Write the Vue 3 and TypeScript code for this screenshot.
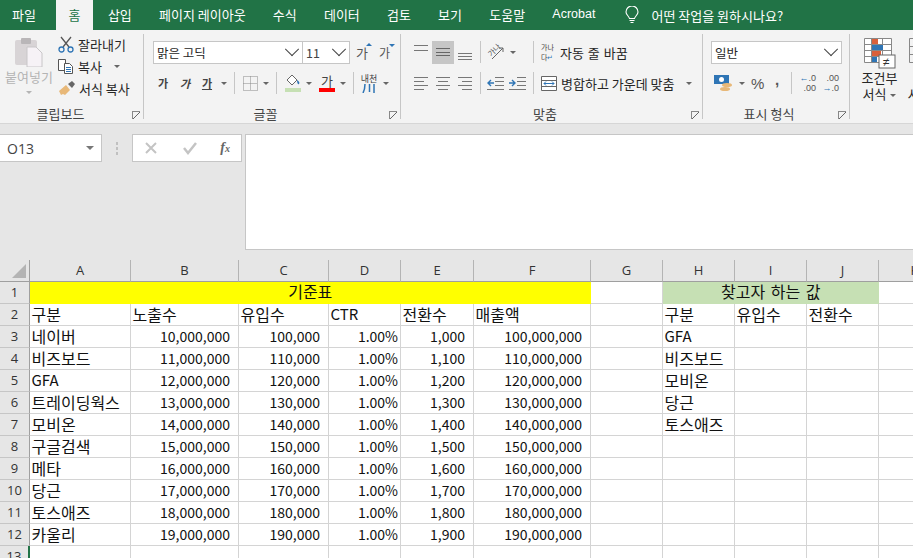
<script setup lang="ts">
const tabs = ['파일', '홈', '삽입', '페이지 레이아웃', '수식', '데이터', '검토', '보기', '도움말', 'Acrobat']
const columns = ['A', 'B', 'C', 'D', 'E', 'F', 'G', 'H', 'I', 'J', 'K']

const fmt = (n: number) => n.toLocaleString('en-US')
const channels = ['네이버', '비즈보드', 'GFA', '트레이딩웍스', '모비온', '구글검색', '메타', '당근', '토스애즈', '카울리']
const lookup = ['GFA', '비즈보드', '모비온', '당근', '토스애즈']

interface Cell {
  text: string
  kind?: 'num' | 'pct'
}

const text = (t = ''): Cell => ({ text: t })
const num = (t: string): Cell => ({ text: t, kind: 'num' })

const headerRow: Cell[] = ['구분', '노출수', '유입수', 'CTR', '전환수', '매출액', '', '구분', '유입수', '전환수', ''].map(t => text(t))

const dataRows: Cell[][] = channels.map((name, i) => [
  text(name),
  num(fmt(10000000 + i * 1000000)),
  num(fmt(100000 + i * 10000)),
  { text: '1.00%', kind: 'pct' },
  num(fmt(1000 + i * 100)),
  num(fmt(100000000 + i * 10000000)),
  text(),
  text(lookup[i] ?? ''),
  text(),
  text(),
  text()
])

const rows: Cell[][] = [headerRow, ...dataRows, Array.from({ length: 11 }, () => text())]

const isLatin = (t: string) => /^[\x00-\x7f]+$/.test(t)
</script>

<template>
  <div class="app">
    <nav class="tabs">
      <span v-for="tab in tabs" :key="tab" class="tab" :class="{ active: tab === '홈' }">{{ tab }}</span>
      <span class="tell">
        <svg width="14" height="19" viewBox="0 0 14 19" fill="none" stroke="#fff" stroke-width="1.1">
          <path d="M4.5 12.5C4 10 1 9 1 6a6 6 0 0 1 12 0c0 3-3 4-3.500 6.500z" />
          <path d="M4.500 14.500h5M5.500 16.500h3" />
        </svg>
        <span>어떤 작업을 원하시나요?</span>
      </span>
    </nav>

    <section class="ribbon">
      <div class="group g-clip">
        <div class="body clip-body">
          <div class="paste">
            <svg width="30" height="30" viewBox="0 0 30 30">
              <rect x="1" y="3" width="22" height="25" rx="2" fill="#d8d4d6" />
              <rect x="7" y="1" width="10" height="6" rx="1" fill="#b9b6b8" />
              <path d="M13 10h9l6 6v14H13z" fill="#f6f2f6" stroke="#c8c6c8" />
            </svg>
            <span class="paste-label">붙여넣기</span>
            <i class="caret faded"></i>
          </div>
          <div class="clip-list">
            <div class="clip-item">
              <svg width="16" height="17" viewBox="0 0 16 17" fill="none">
                <path d="M3 1l8 10M13 1L5 11" stroke="#555" stroke-width="1.300" />
                <circle cx="3.500" cy="13.500" r="2.500" stroke="#2f75b5" stroke-width="1.300" />
                <circle cx="12.500" cy="13.500" r="2.500" stroke="#2f75b5" stroke-width="1.300" />
              </svg>
              <span>잘라내기</span>
            </div>
            <div class="clip-item">
              <svg width="16" height="15" viewBox="0 0 16 15" fill="#fff" stroke="#555">
                <path d="M.5.500h7v11h-7z" />
                <path d="M6.500 4.500h5l3 3v7h-8z" />
                <path d="M8 8.500h5M8 10.500h5M8 12.500h5" stroke="#2f75b5" />
              </svg>
              <span>복사</span>
              <i class="caret tail"></i>
            </div>
            <div class="clip-item">
              <svg width="17" height="15" viewBox="0 0 17 15">
                <path d="M1 10l7-6 4 5-5 5-2-1-2 1z" fill="#e8b878" />
                <path d="M10 3l4-3 3 3-3 4z" fill="#666" />
              </svg>
              <span>서식 복사</span>
            </div>
          </div>
        </div>
        <div class="label">클립보드<i class="launcher"></i></div>
      </div>

      <div class="group g-font">
        <div class="body stack">
          <div class="line">
            <div class="combo font-name"><span>맑은 고딕</span><i class="chev"></i></div>
            <div class="combo font-size"><span>11</span><i class="chev"></i></div>
            <span class="bump">가<i class="tri up"></i></span>
            <span class="bump small">가<i class="tri down"></i></span>
          </div>
          <div class="line tools">
            <b class="mini">가</b>
            <em class="mini">가</em>
            <u class="mini">가</u>
            <i class="caret"></i>
            <i class="sep"></i>
            <svg width="15" height="15" viewBox="0 0 15 15" fill="none" stroke="#888" stroke-dasharray="1 1">
              <path d="M.5.500h14v14H.5zM7.500.500v14M.5 7.500h14" />
            </svg>
            <i class="caret"></i>
            <i class="sep"></i>
            <span class="swatch">
              <svg width="16" height="13" viewBox="0 0 16 13">
                <path d="M2 6l5-5 5 5-5 5z" fill="#fff" stroke="#666" />
                <path d="M12 6c2 1 3 3 2 4s-2-1-2-4z" fill="#2f75b5" />
              </svg>
              <i class="bar green"></i>
            </span>
            <i class="caret"></i>
            <span class="swatch">
              <span class="swatch-text">가</span>
              <i class="bar red"></i>
            </span>
            <i class="caret"></i>
            <i class="sep"></i>
            <span class="ruby"><span>내천</span>
              <svg width="14" height="9" viewBox="0 0 14 9" fill="none" stroke="#2f75b5" stroke-width="1.500">
                <path d="M3 0c0 4-1 7-2 9M7.500 0v8M12 0v9" />
              </svg>
            </span>
            <i class="caret"></i>
          </div>
        </div>
        <div class="label">글꼴<i class="launcher"></i></div>
      </div>

      <div class="group g-align">
        <div class="body stack">
          <div class="line">
            <span class="al"><i class="lines top"></i></span>
            <span class="al on"><i class="lines mid"></i></span>
            <span class="al"><i class="lines bot"></i></span>
            <i class="sep"></i>
            <span class="orient">
              <svg width="18" height="18" viewBox="0 0 18 18" fill="none">
                <text x="1" y="12" font-size="7.500" fill="#555" transform="rotate(-45 5 9)" font-family="Noto Sans CJK KR, sans-serif">가나</text>
                <path d="M5 16L16 5M16 5h-4M16 5v4" stroke="#666" />
              </svg>
              <i class="caret"></i>
            </span>
            <i class="sep"></i>
            <span class="act">
              <span class="wrap-icon">가나<br />다<span class="blue">↵</span></span>
              <span class="wide">자동 줄 바꿈</span>
            </span>
          </div>
          <div class="line">
            <span class="al"><i class="lines left"></i></span>
            <span class="al"><i class="lines center"></i></span>
            <span class="al"><i class="lines right"></i></span>
            <i class="sep"></i>
            <span class="indent">
              <svg width="17" height="13" viewBox="0 0 17 13" fill="none">
                <path d="M8 .5h9M8 4.500h9M8 8.500h9M0 12.500h17" stroke="#777" />
                <path d="M7 6H1M4 3L1 6l3 3" stroke="#2f75b5" stroke-width="1.400" />
              </svg>
              <svg width="17" height="13" viewBox="0 0 17 13" fill="none">
                <path d="M8 .5h9M8 4.500h9M8 8.500h9M0 12.500h17" stroke="#777" />
                <path d="M0 6h6M3 3l3 3-3 3" stroke="#2f75b5" stroke-width="1.400" />
              </svg>
            </span>
            <i class="sep"></i>
            <span class="act">
              <svg width="16" height="15" viewBox="0 0 16 15" fill="#fff" stroke="#666">
                <path d="M.5.500h15v14H.5zM.5 4.500h15M.5 10.500h15" />
                <path d="M3 7.500h10M5 5.500l-2 2 2 2M11 5.500l2 2-2 2" stroke="#2f75b5" fill="none" />
              </svg>
              <span>병합하고 가운데 맞춤</span>
              <i class="caret merge-caret"></i>
            </span>
          </div>
        </div>
        <div class="label">맞춤<i class="launcher"></i></div>
      </div>

      <div class="group g-num">
        <div class="body stack">
          <div class="line">
            <div class="combo num-format"><span>일반</span><i class="chev"></i></div>
          </div>
          <div class="line tools num-tools">
            <svg width="20" height="18" viewBox="0 0 20 18">
              <rect x="0" y="1" width="15" height="9" fill="#2f75b5" />
              <circle cx="7.500" cy="5.500" r="2.500" fill="#fff" />
              <ellipse cx="13" cy="11" rx="5" ry="2" fill="#e8b878" />
              <ellipse cx="11" cy="15" rx="5" ry="2" fill="#e8b878" />
            </svg>
            <i class="caret"></i>
            <span class="percent">%</span>
            <span class="comma">,</span>
            <i class="sep"></i>
            <span class="dec"><span><em class="arr">←</em>.0</span><span>.00</span></span>
            <span class="dec"><span>.00</span><span><em class="arr">→</em>.0</span></span>
          </div>
        </div>
        <div class="label">표시 형식<i class="launcher"></i></div>
      </div>

      <div class="group g-style">
        <div class="style-btn">
          <svg width="32" height="31" viewBox="0 0 32 31">
            <path d="M.5.500h27v24H.5zM.5 6.500h27M.5 12.500h27M.5 18.500h27M7.500.500v24M18.500.500v24" fill="#fff" stroke="#888" />
            <path d="M8 1h6v5H8zM8 13h9v5H8z" fill="#d9603b" />
            <path d="M8 7h11v5H8zM8 19h5v5H8z" fill="#2f75b5" />
            <rect x="15" y="17" width="16" height="13" fill="#fff" stroke="#666" />
            <text x="19" y="28" font-size="12" fill="#333" font-family="Liberation Sans, sans-serif">≠</text>
          </svg>
          <span class="style-label">조건부<br />서식<i class="caret"></i></span>
        </div>
        <div class="style-btn">
          <svg width="32" height="31" viewBox="0 0 32 31" fill="none" stroke="#888">
            <path d="M.5.500h27v24H.5zM.5 8.500h27M.5 16.500h27M9.500.500v24" />
          </svg>
          <span class="style-label">표<br />서식<i class="caret"></i></span>
        </div>
      </div>
    </section>

    <section class="formula">
      <div class="name-box"><span>O13</span><i class="caret"></i></div>
      <div class="dots"><i></i><i></i><i></i></div>
      <div class="fx-box">
        <svg width="16" height="14" viewBox="0 0 16 14" fill="none" stroke="#c4c4c4" stroke-width="2">
          <path d="M3 2l10 10M13 2L3 12" />
        </svg>
        <svg width="16" height="14" viewBox="0 0 16 14" fill="none" stroke="#c4c4c4" stroke-width="2.500">
          <path d="M2 7l4 5 8-10" />
        </svg>
        <span class="fx">f<sub>x</sub></span>
      </div>
      <div class="input"></div>
    </section>

    <section class="sheet">
      <div class="corner"><i></i></div>
      <div v-for="col in columns" :key="col" class="col-head">{{ col }}</div>

      <div class="row-head">1</div>
      <div class="cell title yellow">기준표</div>
      <div class="cell"></div>
      <div class="cell title green">찾고자 하는 값</div>
      <div class="cell"></div>

      <template v-for="(row, r) in rows" :key="r">
        <div class="row-head" :class="{ marked: r === 11 }">{{ r + 2 }}</div>
        <div
          v-for="(cell, c) in row"
          :key="c"
          class="cell"
          :class="[cell.kind, { latin: isLatin(cell.text) }]"
        >{{ cell.text }}</div>
      </template>
    </section>
  </div>
</template>

<style scoped>
.app {
  width: 913px;
  height: 558px;
  overflow: hidden;
  background: #e6e6e6;
  color: #262626;
  font-family: "Noto Sans CJK KR", "Noto Sans", sans-serif;
}

i {
  font-style: normal;
}

/* tab strip */
.tabs {
  height: 30px;
  background: #217346;
  display: flex;
  align-items: center;
  color: #fff;
  font-size: 13px;
}

.tab {
  height: 30px;
  line-height: 29px;
  padding: 0 13.600px;
  white-space: nowrap;
}

.tab:first-child {
  padding: 0 20px 0 12px;
}

.tab.active {
  background: #f3f3f3;
  color: #217346;
  padding: 0 12.500px;
  margin-right: 1.400px;
}

.tell {
  display: flex;
  align-items: center;
  gap: 12px;
  margin-left: 16.500px;
}

.tabs .tab:nth-child(10) {
  font-family: "Liberation Sans", sans-serif;
  font-size: 12.500px;
}

/* ribbon */
.ribbon {
  height: 93px;
  background: #f3f3f3;
  border-bottom: 1px solid #d6d6d6;
  display: flex;
  overflow: hidden;
  font-size: 13px;
}

.group {
  position: relative;
  flex: none;
  box-sizing: border-box;
  height: 85px;
  margin-top: 4px;
  border-right: 1px solid #c6c6c6;
  display: flex;
  flex-direction: column;
}

.g-clip { width: 144px; }
.g-font { width: 257px; padding-left: 9px; }
.g-align { width: 302px; padding-left: 9px; }
.g-num { width: 147px; padding-left: 8px; }
.g-style { width: 62px; border-right: none; flex-direction: row; gap: 8px; padding-left: 11px; }

.body {
  box-sizing: border-box;
  height: 70px;
  flex: none;
}

.label {
  height: 15px;
  line-height: 20px;
  padding-right: 22px;
  text-align: center;
  font-size: 13px;
  color: #444;
}

.launcher {
  position: absolute;
  right: 3px;
  bottom: 0;
  width: 7px;
  height: 7px;
  border-left: 1px solid #888;
  border-top: 1px solid #888;
  background: linear-gradient(135deg, transparent 45%, #666 45%, #666 55%, transparent 55%);
}

.clip-body {
  display: flex;
}

.paste {
  width: 58px;
  flex: none;
  display: flex;
  flex-direction: column;
  align-items: center;
  padding-top: 3px;
}

.paste-label {
  color: #b4b4b4;
  line-height: 18px;
  margin-top: 1px;
  white-space: nowrap;
}

.caret {
  display: inline-block;
  flex: none;
  width: 0;
  height: 0;
  border: 3px solid transparent;
  border-top: 3px solid #666;
  border-bottom: none;
}

.caret.faded {
  border-top-color: #b4b4b4;
  margin-top: 5px;
}

.caret.tail {
  margin-left: 8px;
}

.clip-list {
  display: flex;
  flex-direction: column;
  gap: 3px;
  padding-top: 1px;
}

.clip-item {
  height: 19px;
  display: flex;
  align-items: center;
  gap: 4px;
  white-space: nowrap;
}

.stack {
  display: flex;
  flex-direction: column;
  gap: 7px;
  padding-top: 6px;
}

.line {
  display: flex;
  align-items: center;
  height: 24px;
}

.combo {
  box-sizing: border-box;
  height: 23px;
  background: #fff;
  border: 1px solid #c6c6c6;
  display: flex;
  align-items: center;
  justify-content: space-between;
  padding: 0 5px 0 3px;
  font-size: 12.500px;
}

.font-name { width: 150px; }
.font-size { width: 48px; margin-left: -1px; color: #444; }
.num-format { width: 131px; }

.chev {
  width: 9px;
  height: 9px;
  border-right: 1px solid #444;
  border-bottom: 1px solid #444;
  transform: rotate(45deg) translate(-2px, -2px);
}

.bump {
  position: relative;
  margin-left: 6px;
  width: 16px;
  font-size: 13px;
  color: #555;
}

.bump.small {
  margin-left: 7px;
  font-size: 12px;
}

.tri {
  position: absolute;
  right: 0;
  width: 0;
  height: 0;
  border: 3px solid transparent;
}

.tri.up {
  top: 0;
  border-bottom-color: #2f75b5;
  border-top: none;
}

.tri.down {
  top: 0;
  border-top-color: #2f75b5;
  border-bottom: none;
}

.mini {
  width: 22px;
  text-align: center;
  font-size: 11px;
  color: #444;
  font-weight: 700;
}

.tools .mini:first-child {
  margin-left: -1px;
}

.sep {
  flex: none;
  width: 1px;
  height: 22px;
  background: #c6c6c6;
  margin: 0 7px;
}

.tools .sep {
  margin: 0 8px 0 7px;
}

.g-align .line > .sep:nth-child(4) {
  margin: 0 6px 0 4px;
}

.tools > .caret {
  margin-left: 5px;
}

.tools > .mini + .caret {
  margin-left: 3px;
}

.swatch {
  display: flex;
  flex-direction: column;
  align-items: center;
  width: 16px;
  gap: 1px;
}

.swatch + .caret + .swatch {
  margin-left: 7px;
}

.swatch-text {
  height: 13px;
  line-height: 13px;
  font-size: 13px;
  color: #444;
}

.bar {
  display: block;
  width: 16px;
  height: 4px;
}

.bar.green { background: #c6e0b4; }
.bar.red { background: #ff0000; }

.ruby {
  display: flex;
  flex-direction: column;
  align-items: center;
  width: 16px;
  font-size: 9px;
  line-height: 10px;
  color: #444;
  margin-right: 1px;
  margin-left: -1px;
}

.ruby span {
  white-space: nowrap;
}

.al {
  flex: none;
  width: 22px;
  height: 23px;
  display: flex;
  align-items: center;
  justify-content: center;
}

.al.on {
  background: #c6c6c6;
}

.lines {
  display: block;
  width: 14px;
  height: 16px;
  background-repeat: no-repeat;
}

.lines.top {
  background-image: linear-gradient(#777, #777), linear-gradient(#777, #777);
  background-size: 14px 1px;
  background-position: 0 1px, 0 6px;
}

.lines.mid {
  background-image: linear-gradient(#666, #666), linear-gradient(#666, #666), linear-gradient(#666, #666);
  background-size: 14px 1px;
  background-position: 0 4px, 0 8px, 0 11px;
}

.lines.bot {
  background-image: linear-gradient(#777, #777), linear-gradient(#777, #777), linear-gradient(#777, #777);
  background-size: 14px 1px;
  background-position: 0 9px, 0 12px, 0 15px;
}

.lines.left,
.lines.center,
.lines.right {
  background-image: linear-gradient(#777, #777), linear-gradient(#777, #777), linear-gradient(#777, #777), linear-gradient(#777, #777);
}

.lines.left {
  background-size: 14px 1px, 10px 1px, 14px 1px, 10px 1px;
  background-position: 0 2px, 0 6px, 0 10px, 0 14px;
}

.lines.center {
  background-size: 14px 1px, 10px 1px, 14px 1px, 10px 1px;
  background-position: 0 2px, 2px 6px, 0 10px, 2px 14px;
}

.lines.right {
  background-size: 14px 1px, 10px 1px, 14px 1px, 10px 1px;
  background-position: 0 2px, 4px 6px, 0 10px, 4px 14px;
}

.orient {
  width: 39px;
  display: flex;
  align-items: center;
  gap: 5px;
}

.indent {
  width: 39px;
  display: flex;
  gap: 5px;
}

.act {
  display: flex;
  align-items: center;
  gap: 4px;
  white-space: nowrap;
  width: 155px;
}

.wide {
  word-spacing: 1px;
}

.wrap-icon {
  width: 15px;
  font-size: 7px;
  line-height: 10px;
  color: #444;
  white-space: nowrap;
}

.blue {
  color: #2f75b5;
}

.merge-caret {
  margin-left: 8px;
}

.num-tools > svg {
  margin-left: 3px;
}

.percent {
  font-family: "Liberation Sans", sans-serif;
  font-size: 15px;
  color: #555;
  margin-left: 6px;
  width: 15px;
}

.comma {
  font-family: "Liberation Sans", sans-serif;
  font-weight: 700;
  font-size: 15px;
  color: #555;
  margin-left: 9px;
  margin-bottom: 6px;
  width: 10px;
  line-height: 10px;
}

.g-num .sep {
  margin: 0 6px 0 6px;
}

.dec {
  display: flex;
  flex-direction: column;
  align-items: flex-end;
  width: 18px;
  margin-right: 5px;
  font-family: "Liberation Sans", sans-serif;
  font-size: 9px;
  line-height: 10px;
  color: #555;
}

.arr {
  font-style: normal;
  color: #2f75b5;
}

.style-btn {
  flex: none;
  width: 37px;
  display: flex;
  flex-direction: column;
  align-items: center;
  padding-top: 4px;
  white-space: nowrap;
}

.style-btn .caret {
  margin-left: 4px;
  vertical-align: 2px;
}

.style-label {
  margin-top: 1px;
  line-height: 16px;
  text-align: center;
}

/* formula bar */
.formula {
  height: 136px;
  padding-top: 10px;
  box-sizing: border-box;
  display: flex;
  align-items: flex-start;
  background: #e6e6e6;
}

.name-box {
  box-sizing: border-box;
  width: 102px;
  height: 28px;
  background: #fff;
  border: 1px solid #c6c6c6;
  border-left: none;
  display: flex;
  align-items: center;
  justify-content: space-between;
  padding: 0 7px;
  font-family: "Open Sans", sans-serif;
  font-size: 14px;
  color: #444;
}

.name-box .caret {
  border-width: 4px;
  border-top-color: #777;
  border-bottom: none;
}

.dots {
  width: 30px;
  height: 28px;
  display: flex;
  flex-direction: column;
  align-items: center;
  justify-content: center;
  gap: 2px;
}

.dots i {
  width: 2px;
  height: 3px;
  background: #c0c0c0;
}

.fx-box {
  box-sizing: border-box;
  width: 110px;
  height: 28px;
  background: #fff;
  border: 1px solid #c6c6c6;
  display: flex;
  align-items: center;
  justify-content: space-between;
  padding: 0 11px 0 10px;
}

.fx {
  font-family: "Liberation Serif", serif;
  font-style: italic;
  font-weight: 700;
  font-size: 14px;
  color: #666;
  line-height: 14px;
}

.fx sub {
  font-size: 10px;
  vertical-align: baseline;
}

.input {
  box-sizing: border-box;
  flex: 1;
  height: 116px;
  margin-left: 3px;
  background: #fff;
  border: 1px solid #c6c6c6;
  border-right: none;
}

/* worksheet */
.sheet {
  display: grid;
  grid-template-columns: 30px 101px 108px 90px 72px 73px 117px 72px 72px 72px 72px 72px;
  grid-template-rows: repeat(14, 22px);
  background: #fff;
  width: 971px;
}

.corner {
  position: relative;
  background: #e6e6e6;
  border-right: 1px solid #9f9f9f;
  border-bottom: 1px solid #9f9f9f;
  box-sizing: border-box;
}

.corner i {
  position: absolute;
  right: 3px;
  bottom: 3px;
  width: 0;
  height: 0;
  border-style: solid;
  border-width: 0 0 14px 14px;
  border-color: transparent transparent #b4b4b4 transparent;
}

.col-head {
  box-sizing: border-box;
  background: #e6e6e6;
  border-right: 1px solid #b4b4b4;
  border-bottom: 1px solid #9f9f9f;
  text-align: center;
  line-height: 21px;
  font-family: "Open Sans", sans-serif;
  font-size: 13px;
  color: #333;
}

.row-head {
  box-sizing: border-box;
  background: #e6e6e6;
  border-right: 1px solid #9f9f9f;
  border-bottom: 1px solid #c6c6c6;
  text-align: center;
  line-height: 21px;
  font-family: "Open Sans", sans-serif;
  font-size: 13px;
  color: #333;
}

.row-head.marked {
  border-right: 2px solid #217346;
}

.cell {
  box-sizing: border-box;
  border-right: 1px solid #d4d4d4;
  border-bottom: 1px solid #d4d4d4;
  padding: 0 2px 0 1.500px;
  line-height: 20px;
  font-size: 16px;
  color: #111;
  white-space: nowrap;
}

.cell.latin {
  font-size: 15px;
}

.cell.num,
.cell.pct {
  text-align: right;
  font-size: 14px;
}

.cell.num {
  padding-right: 8px;
}

.cell.title {
  text-align: center;
  line-height: 19px;
  word-spacing: 2px;
  border-right: none;
  border-bottom: none;
}

.yellow {
  grid-column: span 6;
  background: #ffff00;
}

.green {
  grid-column: span 3;
  background: #c6e0b4;
}
</style>
